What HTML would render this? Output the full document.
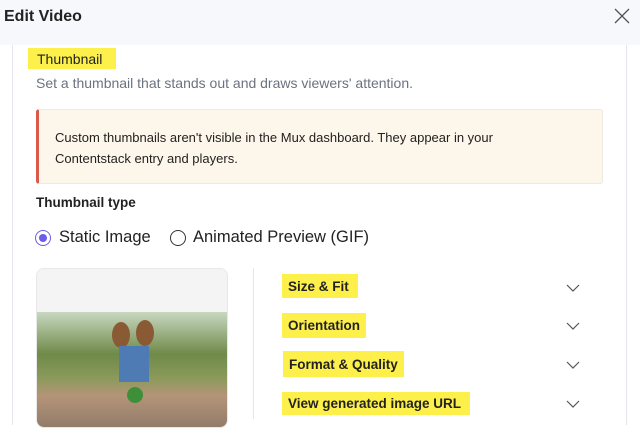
<!DOCTYPE html>
<html><head><style>
*{margin:0;padding:0;box-sizing:border-box}
body{width:640px;height:419px;overflow:hidden;background:#fff;font-family:"Liberation Sans",sans-serif;position:relative}
.hdr{position:absolute;left:0;top:0;width:640px;height:45px;background:#f7f8fc}
.hdr h1{position:absolute;left:4px;top:8px;font-size:16px;font-weight:bold;color:#222}
.card{position:absolute;left:12px;top:45px;width:615px;height:380px;border-left:1px solid #e6e7ec;border-right:1px solid #e6e7ec}
.abs{position:absolute}
.hl{background:#fdf04a;color:#222;font-size:13.5px;font-weight:bold;padding:0 6px;display:flex;align-items:center;white-space:nowrap}
.chev{position:absolute;left:566px;width:14px;height:9px}
</style></head><body>
<div class="hdr"><h1>Edit Video</h1>
<svg class="abs" style="left:614px;top:8px" width="16" height="16" viewBox="0 0 16 16"><path d="M1 1L15 15M15 1L1 15" stroke="#555" stroke-width="1.3"/></svg></div>
<div class="card"></div>
<div class="abs hl" style="left:28px;top:48px;width:88px;height:21px;font-weight:normal;padding-left:9px;font-size:14px">Thumbnail</div>
<div class="abs" style="left:36px;top:75px;font-size:14px;color:#6b7280">Set a thumbnail that stands out and draws viewers' attention.</div>
<div class="abs" style="left:36px;top:109px;width:567px;height:75px;background:#fdf6ea;border:1px solid #efe9df;border-left:3px solid #d75a4a;border-radius:3px"></div>
<div class="abs" style="left:55px;top:127px;font-size:13px;color:#222;line-height:21px">Custom thumbnails aren't visible in the Mux dashboard. They appear in your<br>Contentstack entry and players.</div>
<div class="abs" style="left:36px;top:195px;font-size:13.5px;font-weight:bold;color:#222">Thumbnail type</div>
<div class="abs" style="left:35px;top:230px;width:16px;height:16px;border-radius:50%;border:1.5px solid #6c5ce7;background:#fff"><div style="position:absolute;left:2.5px;top:2.5px;width:8px;height:8px;border-radius:50%;background:#6c5ce7"></div></div>
<div class="abs" style="left:59px;top:228px;font-size:16.5px;color:#222">Static Image</div>
<div class="abs" style="left:170px;top:230px;width:16px;height:16px;border-radius:50%;border:1.3px solid #333"></div>
<div class="abs" style="left:193px;top:228px;font-size:16.5px;color:#222">Animated Preview (GIF)</div>
<div class="abs" style="left:36px;top:268px;width:192px;height:160px;border:1px solid #e8e8e8;border-radius:8px;background:#f4f4f4;overflow:hidden">
<div style="position:absolute;left:0;top:43px;width:192px;height:120px;background:linear-gradient(180deg,#c8d8c0 0%,#6f8a4a 35%,#8a9a5a 55%,#b59478 70%,#8c7868 100%)">
<div style="position:absolute;left:75px;top:10px;width:18px;height:26px;border-radius:50%;background:#8a5a35"></div>
<div style="position:absolute;left:99px;top:8px;width:18px;height:26px;border-radius:50%;background:#8a5a35"></div>
<div style="position:absolute;left:82px;top:34px;width:30px;height:36px;background:#4f7bb5"></div>
<div style="position:absolute;left:90px;top:75px;width:16px;height:16px;border-radius:50%;background:#3e8f3a"></div>
</div></div>
<div class="abs" style="left:253px;top:268px;width:1px;height:151px;background:#e6e6e6"></div>
<div class="abs hl" style="left:282px;top:274px;width:76px;height:24px">Size &amp; Fit</div>
<div class="abs hl" style="left:282px;top:313px;width:84px;height:25px">Orientation</div>
<div class="abs hl" style="left:283px;top:351px;width:121px;height:26px">Format &amp; Quality</div>
<div class="abs hl" style="left:282px;top:392px;width:188px;height:23px">View generated image URL</div>
<svg class="chev" style="top:284px" viewBox="0 0 14 9"><path d="M1 1L7 7L13 1" fill="none" stroke="#555" stroke-width="1.2"/></svg>
<svg class="chev" style="top:322px" viewBox="0 0 14 9"><path d="M1 1L7 7L13 1" fill="none" stroke="#555" stroke-width="1.2"/></svg>
<svg class="chev" style="top:361px" viewBox="0 0 14 9"><path d="M1 1L7 7L13 1" fill="none" stroke="#555" stroke-width="1.2"/></svg>
<svg class="chev" style="top:400px" viewBox="0 0 14 9"><path d="M1 1L7 7L13 1" fill="none" stroke="#555" stroke-width="1.2"/></svg>
</body></html>
